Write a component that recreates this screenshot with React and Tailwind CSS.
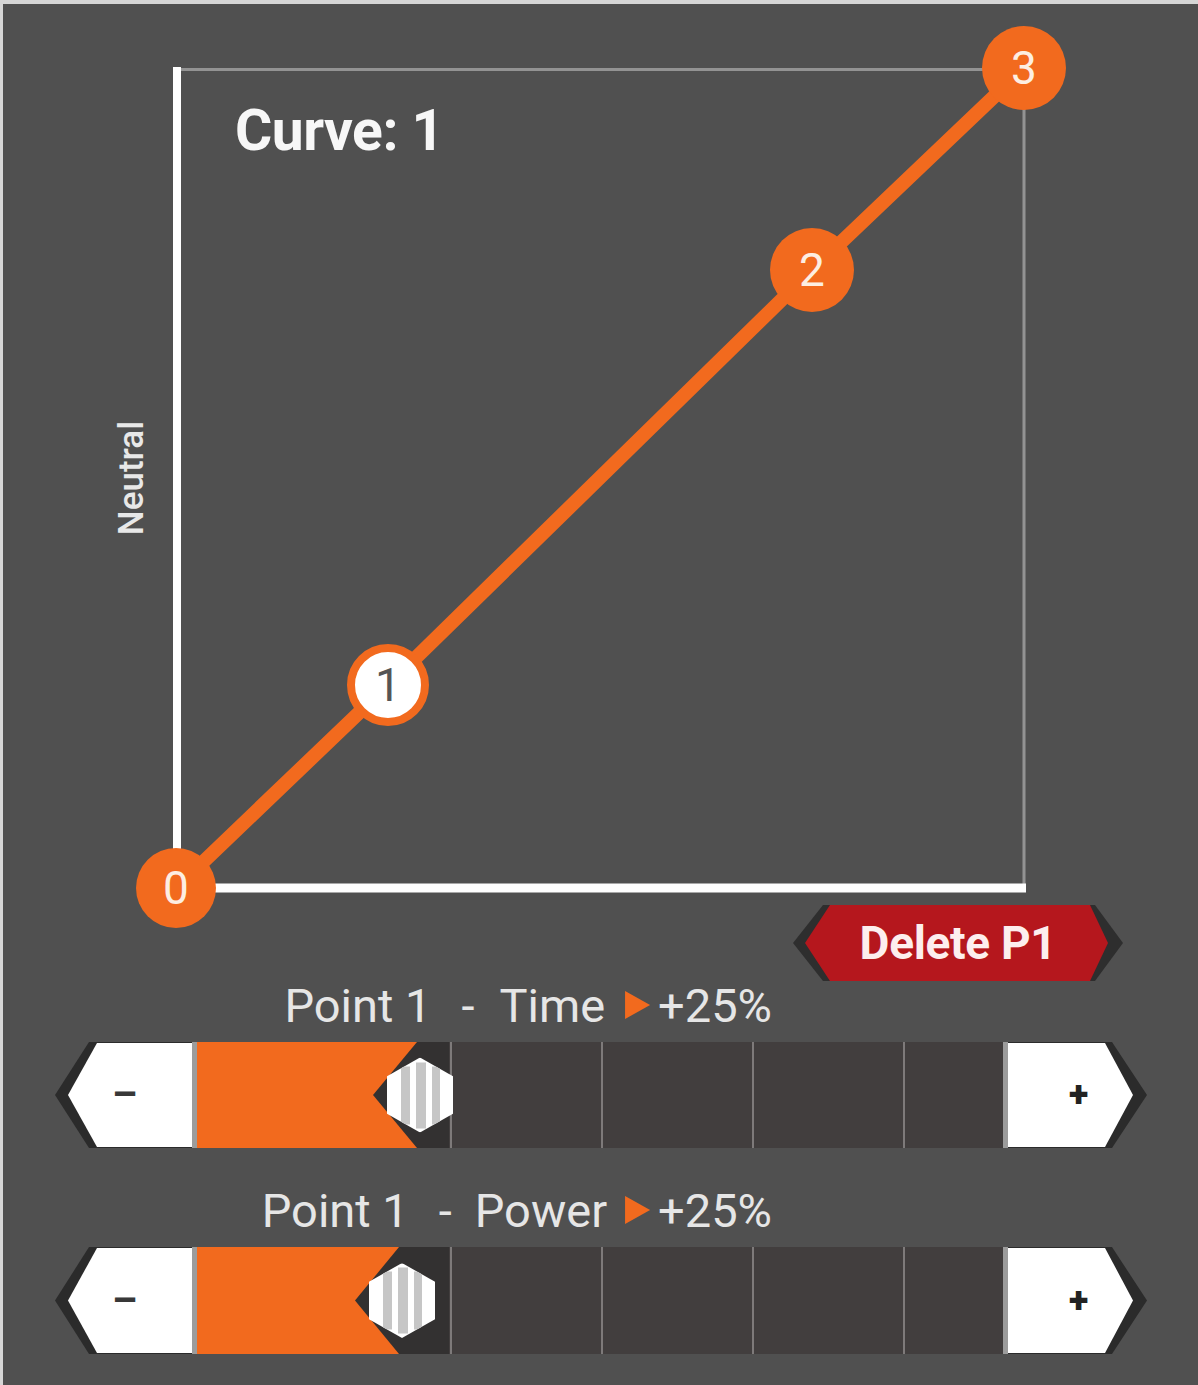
import React from "react";

const ORANGE = "#f26a1e";

// Curve points in page coordinates
const POINTS = [
  { x: 176, y: 888, r: 40, label: "0", active: false },
  { x: 388, y: 685, r: 37, label: "1", active: true },
  { x: 812, y: 270, r: 42, label: "2", active: false },
  { x: 1024, y: 68, r: 42, label: "3", active: false },
];

function CurveChart() {
  return (
    <svg
      className="absolute inset-0 overflow-visible"
      width="1195"
      height="901"
      viewBox="3 4 1195 901"
    >
      {/* frame */}
      <line x1="178" y1="69.5" x2="985" y2="69.5" stroke="#939393" strokeWidth="3" />
      <line x1="1024" y1="105" x2="1024" y2="888" stroke="#939393" strokeWidth="3" />
      {/* axes */}
      <line x1="177" y1="67" x2="177" y2="860" stroke="#ffffff" strokeWidth="8" />
      <line x1="200" y1="888" x2="1026" y2="888" stroke="#ffffff" strokeWidth="9" />
      {/* curve */}
      <polyline
        points={POINTS.map((p) => `${p.x},${p.y}`).join(" ")}
        fill="none"
        stroke={ORANGE}
        strokeWidth="14"
        strokeLinejoin="round"
      />
      {POINTS.map((p) => (
        <g key={p.label}>
          <circle
            cx={p.x}
            cy={p.y}
            r={p.r}
            fill={p.active ? "#ffffff" : ORANGE}
            stroke={ORANGE}
            strokeWidth={p.active ? 8 : 0}
          />
          <text
            x={p.x}
            y={p.y + 16}
            textAnchor="middle"
            fontFamily="Roboto, 'Liberation Sans', sans-serif"
            fontSize="46"
            fill={p.active ? "#555555" : "#fdeee2"}
          >
            {p.label}
          </text>
        </g>
      ))}
    </svg>
  );
}

function DeleteButton() {
  return (
    <button className="relative w-[330px] h-[76px] flex items-center justify-center">
      <span className="absolute inset-0 bg-[#2e2e2e] [clip-path:polygon(0_50%,30px_0,302px_0,100%_50%,302px_100%,30px_100%)]" />
      <span className="absolute inset-0 bg-[#b5171d] [clip-path:polygon(12px_50%,37px_0,297px_0,315px_50%,297px_100%,37px_100%)]" />
      <span className="relative text-[46px] leading-none font-bold text-[#fdeeee] tracking-[-0.3px]">
        Delete P1
      </span>
    </button>
  );
}

function ValueLabel({ name, gapAfterDash, gapAfterName }) {
  return (
    <div className="flex justify-end items-center h-[48px] pr-[426px] text-[47px] leading-none text-[#e6e6e6]">
      <span className="mr-[30px]">Point 1</span>
      <span style={{ marginRight: gapAfterDash }}>-</span>
      <span style={{ marginRight: gapAfterName }}>{name}</span>
      <span className="w-[25px] h-[28px] mr-[8px] bg-[#f26a1e] [clip-path:polygon(0_0,100%_50%,0_100%)]" />
      <span>+25%</span>
    </div>
  );
}

function Thumb() {
  return (
    <div className="w-[66px] h-[75px] bg-white flex justify-center items-center gap-[6px] [clip-path:polygon(50%_0,100%_25%,100%_75%,50%_100%,0_75%,0_25%)]">
      <span className="w-[9px] h-[58px] bg-[#c6c6c6]" />
      <span className="w-[10px] h-[66px] bg-[#c6c6c6]" />
      <span className="w-[8px] h-[58px] bg-[#c6c6c6]" />
    </div>
  );
}

function Slider({ thumbAt, height }) {
  // thumbAt: centre of the thumb measured from the start of the track
  const darkLeft = thumbAt - 47;
  return (
    <div className="flex pl-[52px]" style={{ height }}>
      {/* decrement */}
      <div className="relative w-[137px] h-full flex items-center">
        <span className="absolute inset-0 bg-[#2b2b2b] [clip-path:polygon(0_50%,34px_0,100%_0,100%_100%,34px_100%)]" />
        <span className="absolute inset-0 bg-white [clip-path:polygon(13px_50%,42px_1px,100%_1px,100%_calc(100%-1px),42px_calc(100%-1px))]" />
        <span className="relative ml-[57px] text-[40px] leading-none font-bold text-[#383838]">–</span>
      </div>
      <div className="w-[5px] h-full bg-[#9c9c9c]" />
      {/* track */}
      <div className="relative w-[806px] h-full bg-[#423e3e] flex">
        <div className="w-[253px] h-full" />
        <div className="w-[151px] h-full border-l-2 border-[#7e7a7a]" />
        <div className="w-[151px] h-full border-l-2 border-[#7e7a7a]" />
        <div className="w-[151px] h-full border-l-2 border-[#7e7a7a]" />
        <div className="flex-1 h-full border-l-2 border-[#7e7a7a]" />
        <div
          className="absolute left-0 top-0 h-full bg-[#f26a1e]"
          style={{ width: thumbAt - 3 }}
        />
        <div
          className="absolute top-0 h-full bg-[#333131] [clip-path:polygon(0_50%,44px_0,100%_0,100%_100%,44px_100%)]"
          style={{ left: darkLeft, width: 252 - darkLeft }}
        />
        <div
          className="absolute top-1/2 -translate-y-1/2 -translate-x-1/2"
          style={{ left: thumbAt }}
        >
          <Thumb />
        </div>
      </div>
      <div className="w-[5px] h-full bg-[#9c9c9c]" />
      {/* increment */}
      <div className="relative w-[139px] h-full flex items-center">
        <span className="absolute inset-0 bg-[#2b2b2b] [clip-path:polygon(0_0,104px_0,100%_50%,104px_100%,0_100%)]" />
        <span className="absolute inset-0 bg-white [clip-path:polygon(0_1px,97px_1px,125px_50%,97px_calc(100%-1px),0_calc(100%-1px))]" />
        <span className="relative ml-[61px] text-[36px] leading-none font-black text-[#222222]">+</span>
      </div>
    </div>
  );
}

export default function App() {
  return (
    <div className="w-[1198px] h-[1385px] overflow-hidden bg-[#505050] border-t-4 border-l-[3px] border-[#d6d6d6] font-[Roboto,'Liberation_Sans',sans-serif]">
      {/* curve editor */}
      <div className="relative h-[901px]">
        <CurveChart />
        <div className="absolute left-[232px] top-[98px] text-[57px] leading-none font-bold text-[#f7f7f7] tracking-[-0.5px]">
          Curve: 1
        </div>
        <div className="absolute left-[128px] top-[474px] -translate-x-1/2 -translate-y-1/2 -rotate-90 whitespace-nowrap text-[35px] leading-none font-medium text-[#e8e8e8]">
          Neutral
        </div>
      </div>

      <div className="flex justify-end pr-[75px] h-[76px]">
        <DeleteButton />
      </div>

      <ValueLabel name="Time" gapAfterDash={25} gapAfterName={20} />
      <div className="mt-[13px]">
        <Slider thumbAt={223} height={106} />
      </div>

      <div className="mt-[38px]">
        <ValueLabel name="Power" gapAfterDash={23} gapAfterName={18} />
      </div>
      <div className="mt-[13px]">
        <Slider thumbAt={205} height={107} />
      </div>
    </div>
  );
}
